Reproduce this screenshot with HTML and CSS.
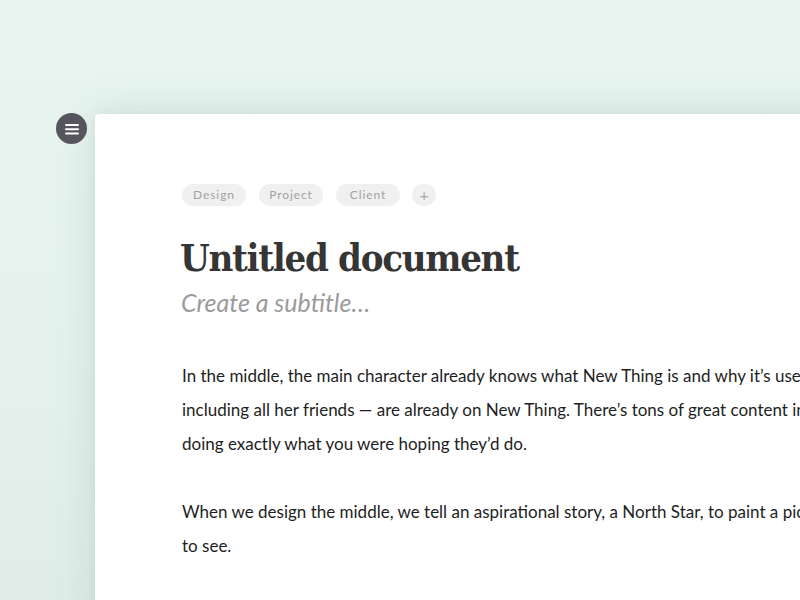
FILE: index.html
```html
<!DOCTYPE html>
<html>
<head>
<meta charset="utf-8">
<link rel="stylesheet" href="styles.css">
</head>
<body>
<div class="stage">
  <button class="menu" aria-label="Menu">
    <svg width="14" height="12" viewBox="0 0 14 12"><rect x="0" y="1" width="14" height="2" rx="1" fill="#fff"/><rect x="0" y="5.25" width="14" height="2" rx="1" fill="#fff"/><rect x="0" y="9.5" width="14" height="2" rx="1" fill="#fff"/></svg>
  </button>
  <main class="card">
    <div class="tags">
      <span class="tag">Design</span>
      <span class="tag">Project</span>
      <span class="tag">Client</span>
      <span class="tag add">+</span>
    </div>
    <h1 class="title">Untitled document</h1>
    <p class="subtitle">Create a subtitle…</p>
    <div class="body">
      <p>In the middle, the main character already knows what New Thing is and why it’s useful. Everyone she knows —<br>including all her friends — are already on New Thing. There’s tons of great content in her feed, and people are<br>doing exactly what you were hoping they’d do.</p>
      <p>When we design the middle, we tell an aspirational story, a North Star, to paint a picture of what we want<br>to see.</p>
    </div>
  </main>
</div>
</body>
</html>
```
FILE: styles.css
```css
html, body {
  margin: 0;
  height: 100%;
  overflow: hidden;
}
body {
  background: linear-gradient(180deg, #e8f4f0 0%, #e4f1ed 60%, #dfece8 100%);
  font-family: "Lato", "Noto Sans", sans-serif;
}
.stage {
  position: relative;
  height: 100%;
  padding: 114px 0 0 95px;
  box-sizing: border-box;
}
.menu {
  position: absolute;
  left: 56px;
  top: 113px;
  width: 31px;
  height: 31px;
  border-radius: 50%;
  border: 0;
  padding: 0;
  background: #56555e;
  display: flex;
  align-items: center;
  justify-content: center;
}
.card {
  background: #fff;
  width: 900px;
  height: 700px;
  border-top-left-radius: 4px;
  box-shadow: 0 0 40px rgba(90, 140, 125, 0.18), 0 0 8px rgba(90, 140, 125, 0.10);
  padding: 70px 0 0 87px;
  box-sizing: border-box;
}
.tags {
  display: flex;
  gap: 13px;
}
.tag {
  min-width: 64px;
  box-sizing: border-box;
  height: 22px;
  padding: 0 10px;
  border-radius: 11px;
  background: #f0f0f0;
  color: #a2a2a2;
  font-size: 12px;
  font-weight: 400;
  letter-spacing: 0.9px;
  line-height: 22px;
  text-align: center;
}
.tag.add {
  min-width: 0;
  width: 24px;
  height: 22px;
  padding: 0;
  letter-spacing: 0;
  font-size: 15px;
  color: #a8a8a8;
  margin-left: -1px;
}
.title {
  margin: 28px 0 0 -2px;
  font-family: "DejaVu Serif Condensed", "DejaVu Serif", serif;
  font-weight: bold;
  font-size: 38px;
  letter-spacing: -1.3px;
  line-height: 48px;
  color: #353535;
}
.subtitle {
  margin: 5px 0 0 -1px;
  font-style: italic;
  font-size: 25px;
  line-height: 30px;
  color: #9b9b9b;
}
.body {
  margin-top: 42px;
}
.body p {
  margin: 0 0 34px;
  font-size: 17px;
  line-height: 34px;
  color: #1e1e1e;
  white-space: nowrap;
}
```
